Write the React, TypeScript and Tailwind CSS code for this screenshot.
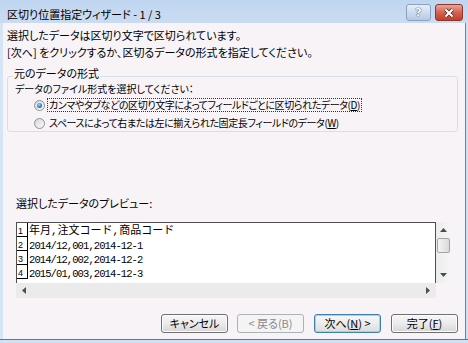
import React from "react";

const ui = "font-['Noto_Sans_CJK_JP','Noto_Sans',sans-serif] [font-feature-settings:'palt']";

const rows = [
  "年月,注文コード,商品コード",
  "2014/12,001,2014-12-1",
  "2014/12,002,2014-12-2",
  "2015/01,003,2014-12-3",
];

function Radio({ checked }: { checked?: boolean }) {
  return (
    <span className="flex h-[11px] w-[11px] shrink-0 items-center justify-center rounded-full border border-[#8e9094] bg-gradient-to-br from-[#d6d6d6] to-[#fbfbfb]">
      {checked && (
        <span className="h-[5px] w-[5px] rounded-full bg-[radial-gradient(circle_at_40%_35%,#9cdcff,#2a7fd0_55%,#0b4585)]" />
      )}
    </span>
  );
}

function Button({
  children,
  disabled,
  focused,
  className = "",
}: {
  children: React.ReactNode;
  disabled?: boolean;
  focused?: boolean;
  className?: string;
}) {
  const look = disabled
    ? "border-[#adb2b5] bg-[#f4f4f4] text-[#8a8a8a]"
    : focused
      ? "border-[#3c7fb1] bg-gradient-to-b from-[#f7f7f7] via-[#ececec] to-[#dcdcdc] shadow-[inset_0_0_0_1px_#9ed2f2]"
      : "border-[#707070] bg-gradient-to-b from-[#f6f6f6] via-[#ebebeb] to-[#d6d6d6] shadow-[inset_0_0_0_1px_#fcfcfc]";
  return (
    <div
      className={`flex h-[19px] w-[67px] items-center justify-center rounded-[3px] border text-[11px] leading-none ${look} ${className}`}
    >
      {children}
    </div>
  );
}

function Arrow({ dir }: { dir: "up" | "down" | "left" | "right" }) {
  const d = {
    up: "M0 4 L3.5 0 L7 4 Z",
    down: "M0 0 L7 0 L3.5 4 Z",
    left: "M4 0 L4 7 L0 3.5 Z",
    right: "M0 0 L4 3.5 L0 7 Z",
  }[dir];
  const vertical = dir === "up" || dir === "down";
  return (
    <svg width={vertical ? 7 : 4} height={vertical ? 4 : 7} viewBox={vertical ? "0 0 7 4" : "0 0 4 7"}>
      <path d={d} fill="#4d4d4d" />
    </svg>
  );
}

function TitleBar() {
  return (
    <div className="flex h-[23px] shrink-0 items-start bg-gradient-to-b from-[#bfd5f0] to-[#cadcf2] pl-[7px] pr-[5px]">
      <span className="mt-[6px] text-[11px] leading-[16px]">区切り位置指定ウィザード - 1 / 3</span>
      <div className="ml-auto mt-[4px] flex gap-[4px]">
        <div className="flex h-[17px] w-[25px] items-center justify-center rounded-[3px] border border-[#8aa1c0] bg-gradient-to-b from-[#e6eef9] via-[#cddcef] to-[#b4cae6]">
          <span className="font-['DejaVu_Sans',sans-serif] text-[11px] font-bold leading-none text-white [text-shadow:0_0_1px_#2e4466,0_0_1px_#2e4466]">
            ?
          </span>
        </div>
        <div className="flex h-[17px] w-[28px] items-center justify-center rounded-[3px] border border-[#8c372c] bg-gradient-to-b from-[#e8a598] via-[#d2634f] to-[#c23f28]">
          <svg width="12" height="10" viewBox="0 0 12 10">
            <path d="M2.5 1.5 L9.5 8.5 M9.5 1.5 L2.5 8.5" stroke="#5a1f16" strokeWidth="3.8" />
            <path d="M2.5 1.5 L9.5 8.5 M9.5 1.5 L2.5 8.5" stroke="#ffffff" strokeWidth="2.2" />
          </svg>
        </div>
      </div>
    </div>
  );
}

function Preview() {
  return (
    <div className="ml-[13px] mt-[11px] flex flex-col">
      <div className="flex h-[61px]">
        <div className="w-[420px] overflow-hidden border-l border-r border-t border-[#4f4f4f] bg-white">
          {rows.map((r, i) => (
            <div key={i} className="flex h-[14px]">
              <div className="flex w-[11px] shrink-0 items-end border-b border-r border-black pl-[1px] font-['Liberation_Sans',sans-serif] text-[9px] leading-[10px]">
                {i + 1}
              </div>
              <span
                className={
                  i === 0
                    ? "whitespace-pre pl-[1px] pt-[1px] font-['Liberation_Mono','Noto_Sans_CJK_JP',monospace] text-[11px] leading-[14px] [font-feature-settings:normal]"
                    : "whitespace-pre pl-[1px] pt-[2px] font-['Liberation_Mono',monospace] text-[10.5px] leading-[14px] tracking-[-0.9px]"
                }
              >
                {r}
              </span>
            </div>
          ))}
        </div>
        <div className="flex w-[15px] flex-col items-center bg-gradient-to-r from-[#ececec] to-[#f6f6f6] pt-[6px]">
          <Arrow dir="up" />
          <div className="mt-[6px] h-[15px] w-[13px] rounded-[2px] border border-[#a4a4a4] bg-gradient-to-r from-[#f4f4f4] to-[#dadada]" />
          <div className="mt-auto mb-[6px]">
            <Arrow dir="down" />
          </div>
        </div>
      </div>
      <div className="flex h-[15px] w-[420px] items-center justify-between bg-[#ebebeb] px-[6px]">
        <Arrow dir="left" />
        <Arrow dir="right" />
      </div>
    </div>
  );
}

function Client() {
  return (
    <div className="flex w-[462px] flex-col bg-[#f7f3f7] pt-[4px] text-[11px]">
      <div className="h-[16px] pl-[4px] leading-[16px]">選択したデータは区切り文字で区切られています。</div>
      <div className="mt-[1px] h-[16px] pl-[4px] leading-[16px]">
        [次へ] をクリックするか、区切るデータの形式を指定してください。
      </div>

      <div className="relative ml-[4px] mt-[16px] h-[56px] w-[451px] rounded-[3px] border border-[#d5dfe5]">
        <span className="absolute left-[5px] top-[-12px] bg-[#f7f3f7] px-[1px] leading-[16px]">元のデータの形式</span>
        <div className="mt-[4px] h-[16px] pl-[7px] text-[10px] leading-[16px]">
          データのファイル形式を選択してください：
        </div>
        <div className="flex h-[16px] items-center pl-[26px]">
          <Radio checked />
          <span className="ml-[2px] flex h-[14px] items-center border border-dotted border-[#333] px-[1px] text-[10px] leading-[14px] tracking-[-0.4px]">
            カンマやタブなどの区切り文字によってフィールドごとに区切られたデータ(<span className="underline">D</span>)
          </span>
        </div>
        <div className="mt-[2px] flex h-[16px] items-center pl-[26px]">
          <Radio />
          <span className="ml-[4px] text-[10px] leading-[14px] tracking-[-0.4px]">
            スペースによって右または左に揃えられた固定長フィールドのデータ(<span className="underline">W</span>)
          </span>
        </div>
      </div>

      <div className="mt-[63px] h-[16px] pl-[13px] leading-[16px]">選択したデータのプレビュー:</div>
      <Preview />

      <div className="mt-[16px] flex justify-end pr-[7px]">
        <Button>キャンセル</Button>
        <Button disabled className="ml-[9px]">
          &lt; 戻る(B)
        </Button>
        <Button focused className="ml-[10px]">
          次へ(<span className="underline">N</span>) &gt;
        </Button>
        <Button className="ml-[10px]">
          完了(<span className="underline">F</span>)
        </Button>
      </div>
    </div>
  );
}

export default function App() {
  return (
    <div className={`flex h-[343px] w-[468px] flex-col overflow-hidden bg-[#c9dcf2] text-black ${ui}`}>
      <TitleBar />
      <div className="flex min-h-0 flex-1">
        <div className="w-[3px] bg-[#d6e5f6]" />
        <Client />
        <div className="w-[3px] border-l border-[#3b97d3] bg-[#cfe1f5]" />
      </div>
      <div className="h-[4px] shrink-0 border-t border-[#2a8cb6] bg-[#cfe1f5]" />
    </div>
  );
}
